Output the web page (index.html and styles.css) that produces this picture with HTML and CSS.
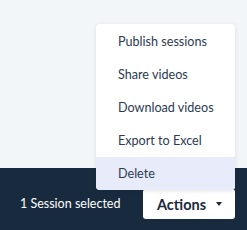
FILE: index.html
```html
<!DOCTYPE html>
<html>
<head>
<meta charset="utf-8">
<link rel="stylesheet" href="styles.css">
</head>
<body>
<div class="page">
  <div class="content"></div>
  <div class="footer">
    <span class="count">1 Session selected</span>
    <div class="actions">
      <ul class="menu">
        <li class="item">Publish sessions</li>
        <li class="item">Share videos</li>
        <li class="item">Download videos</li>
        <li class="item">Export to Excel</li>
        <li class="item active">Delete</li>
      </ul>
      <button class="btn">Actions <span class="caret"></span></button>
    </div>
  </div>
</div>
</body>
</html>
```
FILE: styles.css
```css
* { box-sizing: border-box; }
html, body { margin: 0; padding: 0; }
body {
  width: 247px;
  height: 230px;
  overflow: hidden;
  font-family: Lato, "Liberation Sans", sans-serif;
  background: #f3f6f8;
}
.page {
  display: flex;
  flex-direction: column;
  height: 230px;
}
.content { flex: 1; }
.footer {
  height: 62px;
  background: #182a3e;
  display: flex;
  align-items: flex-start;
  justify-content: space-between;
  padding: 21px 12px 0 20px;
}
.count {
  color: #ffffff;
  font-size: 12.5px;
  line-height: 30px;
}
.actions {
  position: relative;
}
.btn {
  display: flex;
  align-items: center;
  width: 92px;
  height: 30px;
  background: #ffffff;
  border: none;
  border-radius: 3px;
  padding: 0 0 0 14px;
  font-family: inherit;
  font-size: 14.5px;
  font-weight: 700;
  color: #1b2a3c;
}
.caret {
  display: inline-block;
  margin-left: 10px;
  width: 0;
  height: 0;
  border-left: 3px solid transparent;
  border-right: 3px solid transparent;
  border-top: 4px solid #1b2a3c;
}
.menu {
  position: absolute;
  right: 0;
  bottom: calc(100% - 1px);
  width: 139px;
  margin: 0;
  padding: 1px 0 0;
  list-style: none;
  background: #ffffff;
  border-radius: 4px;
  box-shadow: 0 1px 4px rgba(20, 40, 60, 0.12);
  overflow: hidden;
}
.item {
  height: 33px;
  display: flex;
  align-items: center;
  padding-left: 22px;
  font-size: 12.6px;
  color: #2d3b50;
}
.item.active {
  background: #e8ebfa;
}
```
